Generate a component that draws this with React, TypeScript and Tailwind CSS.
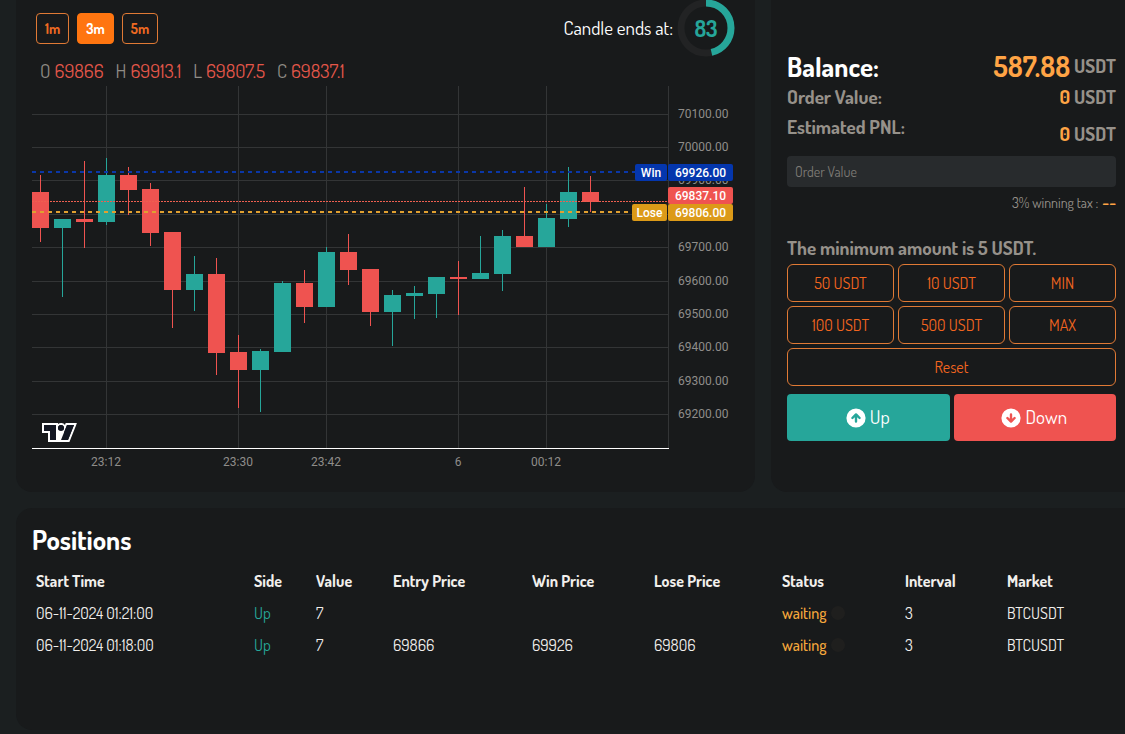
import { HiArrowCircleDown, HiArrowCircleUp } from "react-icons/hi";

const UP = "#26a69a";
const DOWN = "#ef5350";

type Candle = [direction: "u" | "d", top: number, bottom: number, high: number, low: number];

const candles: Candle[] = [
  ["d", 106, 142, 89, 156],
  ["u", 133, 142, 133, 211],
  ["d", 133, 136, 75, 162],
  ["u", 89, 136, 72, 139],
  ["d", 89, 104, 81, 129],
  ["d", 103, 147, 97, 160],
  ["d", 146, 204, 146, 242],
  ["u", 188, 204, 170, 225],
  ["d", 188, 267, 172, 289],
  ["d", 266, 284, 249, 322],
  ["u", 265, 284, 263, 326],
  ["u", 197, 266, 195, 266],
  ["d", 197, 221, 184, 237],
  ["u", 166, 221, 161, 221],
  ["d", 166, 184, 148, 199],
  ["d", 183, 226, 183, 240],
  ["u", 209, 226, 204, 260],
  ["u", 207, 210, 200, 233],
  ["u", 191, 208, 191, 232],
  ["d", 191, 193, 175, 229],
  ["u", 187, 193, 150, 193],
  ["u", 150, 188, 144, 205],
  ["d", 150, 161, 101, 161],
  ["u", 132, 161, 118, 161],
  ["u", 106, 133, 81, 141],
  ["d", 106, 116, 90, 126],
];

const priceLines: [string, number][] = [
  ["70100.00", 28],
  ["70000.00", 61],
  ["69900.00", 94],
  ["", 128],
  ["69700.00", 161],
  ["69600.00", 195],
  ["69500.00", 228],
  ["69400.00", 261],
  ["69300.00", 295],
  ["69200.00", 328],
];

const timeLines: [string, number][] = [
  ["23:12", 74],
  ["23:30", 206],
  ["23:42", 294],
  ["6", 426],
  ["00:12", 514],
];

function Tag({ x, y, width, fill, label }: { x: number; y: number; width: number; fill: string; label: string }) {
  return (
    <g>
      <rect x={x} y={y} width={width} height={17} rx={2} fill={fill} />
      <text x={x + width / 2} y={y + 13} textAnchor="middle" fill="#fff" className="font-medium">
        {label}
      </text>
    </g>
  );
}

function CandleChart() {
  return (
    <svg viewBox="0 0 707 386" role="img" aria-label="BTCUSDT price chart" className="block h-auto w-full font-['Trebuchet_MS','Roboto',sans-serif] text-[12px]">
      <g fill="#333536" shapeRendering="crispEdges">
        {priceLines.map(([, y]) => (
          <rect key={y} x={0} y={y} width={637} height={1} />
        ))}
        {timeLines.map(([label, x]) => (
          <rect key={label} x={x} y={0} width={1} height={362} />
        ))}
        <rect x={636} y={0} width={1} height={362} />
      </g>
      <g shapeRendering="crispEdges">
        {candles.map(([dir, top, bottom, high, low], i) => (
          <g key={i} fill={dir === "u" ? UP : DOWN}>
            <rect x={22 * i + 8} y={high} width={1} height={low - high} />
            <rect x={22 * i} y={top} width={17} height={bottom - top} />
          </g>
        ))}
      </g>
      <g shapeRendering="crispEdges" fill="none">
        <path d="M0 86H603" stroke="#0a37a8" strokeWidth={2} strokeDasharray="4 4" />
        <path d="M0 115.5H636" stroke="#ef5f50" strokeWidth={1} strokeDasharray="2 1" />
        <path d="M0 126H600" stroke="#e0a030" strokeWidth={2} strokeDasharray="4 4" />
      </g>
      <g fill="#8f8d8a">
        {priceLines
          .filter(([label]) => label)
          .map(([label, y]) => (
            <text key={label} x={646} y={y + 4}>
              {label}
            </text>
          ))}
        {timeLines.map(([label, x]) => (
          <text key={label} x={x} y={380} textAnchor="middle">
            {label}
          </text>
        ))}
      </g>
      <Tag x={603} y={78} width={32} fill="#0436ad" label="Win" />
      <Tag x={636} y={78} width={65} fill="#0436ad" label="69926.00" />
      <Tag x={636} y={101} width={65} fill={DOWN} label="69837.10" />
      <Tag x={600} y={118} width={35} fill="#dc9a18" label="Lose" />
      <Tag x={636} y={118} width={65} fill="#dc9a18" label="69806.00" />
      <rect x={0} y={362} width={637} height={1} fill="#fff" shapeRendering="crispEdges" />
      <g transform="translate(10 337)">
        <path
          fill="#fff"
          fillRule="evenodd"
          d="M2 0H0v10h6v9h21.4l.5-1.3 6-15 1-2.7H23.7l-.5 1.3-.2.6a5 5 0 0 0-7-.9V0H2Zm20 17h4l5.2-13 .8-2h-7l-1 2.5-.2.5-1.5 3.8-.3.7V17Zm-.8-10a3 3 0 0 0 .7-2.7A3 3 0 1 0 16.8 7h4.4ZM14 7V2H2v6h6v9h4V7h2Z"
        />
        <path fill="#131722" d="M14 2H2v6h6v9h6V2Zm12 15h-7l6-15h7l-6 15Zm-7-9a3 3 0 1 0 0-6 3 3 0 0 0 0 6Z" />
      </g>
    </svg>
  );
}

function Countdown({ seconds, total }: { seconds: number; total: number }) {
  const length = 2 * Math.PI * 25;
  return (
    <div className="relative flex size-[58px] items-center justify-center">
      <svg viewBox="0 0 58 58" className="absolute inset-0 size-full -rotate-90" fill="none" strokeWidth={7}>
        <circle cx={29} cy={29} r={25} stroke="#222324" />
        <circle cx={29} cy={29} r={25} stroke={UP} strokeDasharray={`${(length * seconds) / total} ${length}`} />
      </svg>
      <span className="text-[22px] leading-none font-bold text-[#26a69a]">{seconds}</span>
    </div>
  );
}

const ohlc = [
  ["O", "69866"],
  ["H", "69913.1"],
  ["L", "69807.5"],
  ["C", "69837.1"],
];

function ChartCard() {
  return (
    <section className="min-w-0 flex-1 rounded-b-2xl bg-[#181a1b] px-4 pb-5">
      <div className="flex h-14 items-center justify-between pr-1 pl-1">
        <div className="flex gap-2">
          {["1m", "3m", "5m"].map((label) => (
            <button
              key={label}
              type="button"
              className={
                "h-[31px] rounded border px-2 text-[14px] font-bold " +
                (label === "3m" ? "border-[#ff7510] bg-[#ff7510] text-white" : "border-[#e07a35] text-[#ee6a22]")
              }
            >
              {label}
            </button>
          ))}
        </div>
        <div className="flex items-center gap-1">
          <span className="text-[19px] text-white">Candle ends at:</span>
          <Countdown seconds={83} total={180} />
        </div>
      </div>
      <div className="flex h-[30px] items-center gap-3 px-2 text-[19px]">
        {ohlc.map(([name, value]) => (
          <span key={name} className="flex gap-1">
            <span className="text-[#8f8b85]">{name}</span>
            <span className="text-[#e4574a]">{value}</span>
          </span>
        ))}
      </div>
      <CandleChart />
    </section>
  );
}

function Amount({ value, large }: { value: string; large?: boolean }) {
  return (
    <span className="flex items-center gap-1 text-[19px] font-bold text-[#96918a]">
      <span className={large ? "text-[28px] text-[#ffa445]" : "text-[#ffa445]"}>{value}</span>
      USDT
    </span>
  );
}

function OrderCard() {
  return (
    <section className="w-[354px] shrink-0 rounded-bl-2xl bg-[#181a1b] pt-[50px] pr-[9px] pl-4 text-[#96918a]">
      <div className="flex h-8 items-center justify-between">
        <h2 className="text-[27px] font-bold text-white">Balance:</h2>
        <Amount value="587.88" large />
      </div>
      <div className="flex h-[31px] items-center justify-between">
        <span className="text-[19px] font-bold">Order Value:</span>
        <Amount value="0" />
      </div>
      <div className="flex h-[43px] justify-between">
        <span className="text-[19px] leading-[27px] font-bold">Estimated PNL:</span>
        <Amount value="0" />
      </div>
      <input
        aria-label="Order Value"
        placeholder="Order Value"
        className="block h-[31px] w-full rounded bg-[#282b2d] px-2 text-[14px] text-white placeholder:text-[#7d7a75]"
      />
      <p className="flex h-[31px] items-center justify-end gap-1 text-[14px]">
        3% winning tax : <span className="font-bold text-[#ffa445]">−−</span>
      </p>
      <p className="mt-4 mb-px flex h-[29px] items-center text-[19px] font-bold">The minimum amount is 5 USDT.</p>
      <div className="grid grid-cols-3 gap-1 text-[16px] text-[#f2651f]">
        {["50 USDT", "10 USDT", "MIN", "100 USDT", "500 USDT", "MAX"].map((label) => (
          <button key={label} type="button" className="h-[38px] rounded-md border border-[#e07a35]">
            {label}
          </button>
        ))}
        <button type="button" className="col-span-3 h-[38px] rounded-md border border-[#e07a35]">
          Reset
        </button>
      </div>
      <div className="mt-2 grid grid-cols-2 gap-1 text-[19px] text-white">
        <button type="button" className="flex h-[47px] items-center justify-center gap-0.5 rounded bg-[#26a69a] pr-[3px]">
          <HiArrowCircleUp className="size-6" />
          Up
        </button>
        <button type="button" className="flex h-[47px] items-center justify-center gap-0.5 rounded bg-[#ef5350] pr-[3px]">
          <HiArrowCircleDown className="size-6" />
          Down
        </button>
      </div>
    </section>
  );
}

const columns: [string, string][] = [
  ["Start Time", "w-[218px]"],
  ["Side", "w-[62px]"],
  ["Value", "w-[77px]"],
  ["Entry Price", "w-[139px]"],
  ["Win Price", "w-[122px]"],
  ["Lose Price", "w-[128px]"],
  ["Status", "w-[123px]"],
  ["Interval", "w-[102px]"],
  ["Market", ""],
];

const positions = [
  { start: "06-11-2024 01:21:00", entry: "", win: "", lose: "" },
  { start: "06-11-2024 01:18:00", entry: "69866", win: "69926", lose: "69806" },
];

function PositionsCard() {
  return (
    <section className="mt-4 rounded-l-2xl bg-[#181a1b] pt-3 pr-[9px] pb-[69px] pl-4">
      <h2 className="flex h-[38px] items-center text-[27px] font-bold text-white">Positions</h2>
      <table className="mt-[7px] w-full table-fixed border-separate border-spacing-0 text-left text-[16px] text-[#f1efec]">
        <thead>
          <tr>
            {columns.map(([name, width]) => (
              <th key={name} className={`${width} h-8 px-1 py-0 font-bold`}>
                {name}
              </th>
            ))}
          </tr>
        </thead>
        <tbody>
          {positions.map((row) => (
            <tr key={row.start}>
              <td className="h-8 px-1 py-0">{row.start}</td>
              <td className="px-1 py-0 text-[#26a69a]">Up</td>
              <td className="px-1 py-0">7</td>
              <td className="px-1 py-0">{row.entry}</td>
              <td className="px-1 py-0">{row.win}</td>
              <td className="px-1 py-0">{row.lose}</td>
              <td className="px-1 py-0 font-medium text-[#f5a83c]">
                <span className="flex items-center gap-1">
                  waiting
                  <span className="size-[14px] rounded-full bg-[#1f1f1e]" />
                </span>
              </td>
              <td className="px-1 py-0">3</td>
              <td className="px-1 py-0">BTCUSDT</td>
            </tr>
          ))}
        </tbody>
      </table>
    </section>
  );
}

export default function App() {
  return (
    <main className="min-h-screen bg-[#1b1f20] pl-4 font-['Dosis','Roboto_Condensed','Liberation_Sans_Narrow','Roboto',sans-serif]">
      <div className="flex gap-4">
        <ChartCard />
        <OrderCard />
      </div>
      <PositionsCard />
    </main>
  );
}
